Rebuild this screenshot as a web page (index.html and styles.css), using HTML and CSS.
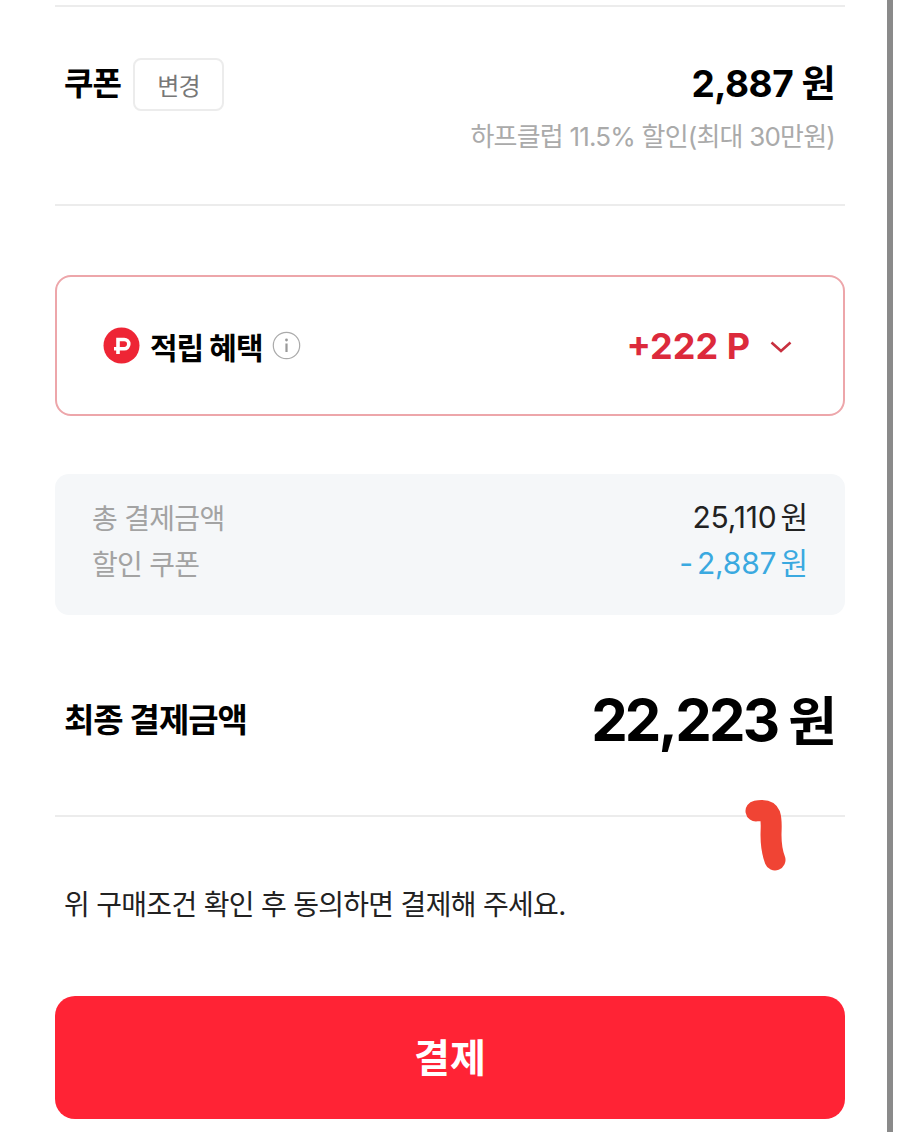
FILE: index.html
```html
<!DOCTYPE html>
<html lang="ko">
<head>
    <meta charset="UTF-8">
    <meta name="viewport" content="width=device-width, initial-scale=1.0">
    <title>결제</title>
    <link rel="stylesheet" href="styles.css">
</head>
<body>
    <div class="page">
        <div class="container">
            <section class="coupon">
                <div class="coupon-left">
                    <span class="coupon-title">쿠폰</span>
                    <button class="change-btn" type="button">변경</button>
                </div>
                <div class="coupon-right">
                    <div class="coupon-amount">2,887 원</div>
                    <div class="coupon-note">하프클럽 11.5% 할인(최대 30만원)</div>
                </div>
            </section>

            <section class="point-box">
                <div class="point-left">
                    <svg class="point-icon" width="37" height="37" viewBox="0 0 37 37">
                        <circle cx="18.5" cy="18.5" r="18" fill="#ee2535"/>
                        <path d="M15 27V12.500h6.200a4.600 4.600 0 0 1 0 9.200H11" fill="none" stroke="#fff" stroke-width="3.600"/>
                    </svg>
                    <span class="point-title">적립 혜택</span>
                    <svg class="info-icon" width="29" height="29" viewBox="0 0 29 29">
                        <circle cx="14.5" cy="14.5" r="13.2" fill="none" stroke="#aaa" stroke-width="1.2"/>
                        <circle cx="14.5" cy="9" r="1.4" fill="#999"/>
                        <rect x="13.4" y="12.5" width="2.2" height="8.5" fill="#999"/>
                    </svg>
                </div>
                <div class="point-right">
                    <span class="point-value">+222 P</span>
                    <svg class="chevron" width="24" height="14" viewBox="0 0 24 14">
                        <path d="M2.500 2.500 12 11l9.500-8.500" fill="none" stroke="#c8303f" stroke-width="2.600"/>
                    </svg>
                </div>
            </section>

            <section class="summary">
                <div class="summary-row">
                    <span class="summary-label">총 결제금액</span>
                    <span class="summary-value">25,110 원</span>
                </div>
                <div class="summary-row">
                    <span class="summary-label">할인 쿠폰</span>
                    <span class="summary-value discount">- 2,887 원</span>
                </div>
            </section>

            <section class="total">
                <span class="total-label">최종 결제금액</span>
                <span class="total-value">22,223 <span class="won">원</span></span>
            </section>

            <p class="agree">위 구매조건 확인 후 동의하면 결제해 주세요.</p>

            <button class="pay-btn" type="button">결제</button>
        </div>

        <!-- hand drawn mark over the screenshot -->
        <svg class="scribble" width="50" height="80" viewBox="0 0 50 80">
            <path d="M15 14c6-1 12-1 14 4 2 6 1 14 1 20 0 9 1 17 4 25" fill="none" stroke="#f04434" stroke-width="21" stroke-linecap="round" stroke-linejoin="round"/>
        </svg>
    </div>
</body>
</html>
```

FILE: styles.css
```css
* { box-sizing: border-box; }
html, body { margin: 0; padding: 0; }
body { background-color: #fff; color: #000; font-family: Inter, "Noto Sans CJK KR", sans-serif; }

.page { position: relative; width: 893px; height: 1132px; border-right: 6px solid #8a8a8a; overflow: hidden; }
.container { width: 790px; margin-left: 55px; padding-top: 5px; }

.coupon { display: flex; justify-content: space-between; height: 201px; padding: 51px 10px 0 9px; border-top: 2px solid #ececec; border-bottom: 2px solid #ececec; }
.coupon-left { display: flex; align-items: flex-start; gap: 12px; }
.coupon-title { font-size: 32px; font-weight: 700; line-height: 52px; letter-spacing: -1px; }
.change-btn { width: 91px; height: 53px; background-color: #fff; color: #777; font-family: inherit; font-size: 24px; border: 2px solid #ececec; border-radius: 8px; padding: 0; letter-spacing: -1px; }
.coupon-right { text-align: right; }
.coupon-amount { font-size: 37px; font-weight: 700; line-height: 52px; letter-spacing: -0.5px; }
.coupon-note { margin-top: 7px; color: #aaa; font-size: 26px; line-height: 40px; letter-spacing: -0.8px; }

.point-box { display: flex; justify-content: space-between; align-items: center; height: 141px; margin-top: 69px; padding: 0 50px 0 46px; border: 2px solid #eda6aa; border-radius: 16px; }
.point-left { display: flex; align-items: center; }
.point-title { margin-left: 10px; font-size: 30px; font-weight: 700; letter-spacing: -1px; }
.info-icon { margin-left: 9px; }
.point-right { display: flex; align-items: center; gap: 19px; }
.point-value { color: #dc2a3c; font-size: 36px; font-weight: 700; }
.chevron { margin-top: 2px; }

.summary { display: flex; flex-direction: column; gap: 6px; height: 141px; margin-top: 58px; padding: 25px 37px 0; background-color: #f5f7f9; border-radius: 14px; }
.summary-row { display: flex; justify-content: space-between; line-height: 40px; }
.summary-label { color: #a3a3a3; font-size: 28px; letter-spacing: -0.7px; }
.summary-value { margin-top: -2px; color: #222; font-size: 30px; letter-spacing: -0.2px; word-spacing: -4px; }
.discount { color: #3aa9e0; }

.total { display: flex; justify-content: space-between; align-items: center; height: 202px; padding: 6px 8px 0 9px; border-bottom: 2px solid #ececec; }
.total-label { font-size: 33px; font-weight: 700; letter-spacing: -1px; }
.total-value { font-size: 58px; font-weight: 700; letter-spacing: -2.8px; }
.won { font-size: 53px; letter-spacing: 0; }

.agree { margin: 63px 0 0 9px; font-size: 28px; line-height: 50px; color: #222; letter-spacing: -0.7px; }

.pay-btn { display: block; width: 100%; height: 123px; margin-top: 66px; padding: 0 0 6px; background-color: #ff2335; color: #fff; font-family: inherit; font-size: 39px; font-weight: 700; border: none; border-radius: 20px; }

.scribble { position: absolute; left: 741px; top: 797px; }
```
